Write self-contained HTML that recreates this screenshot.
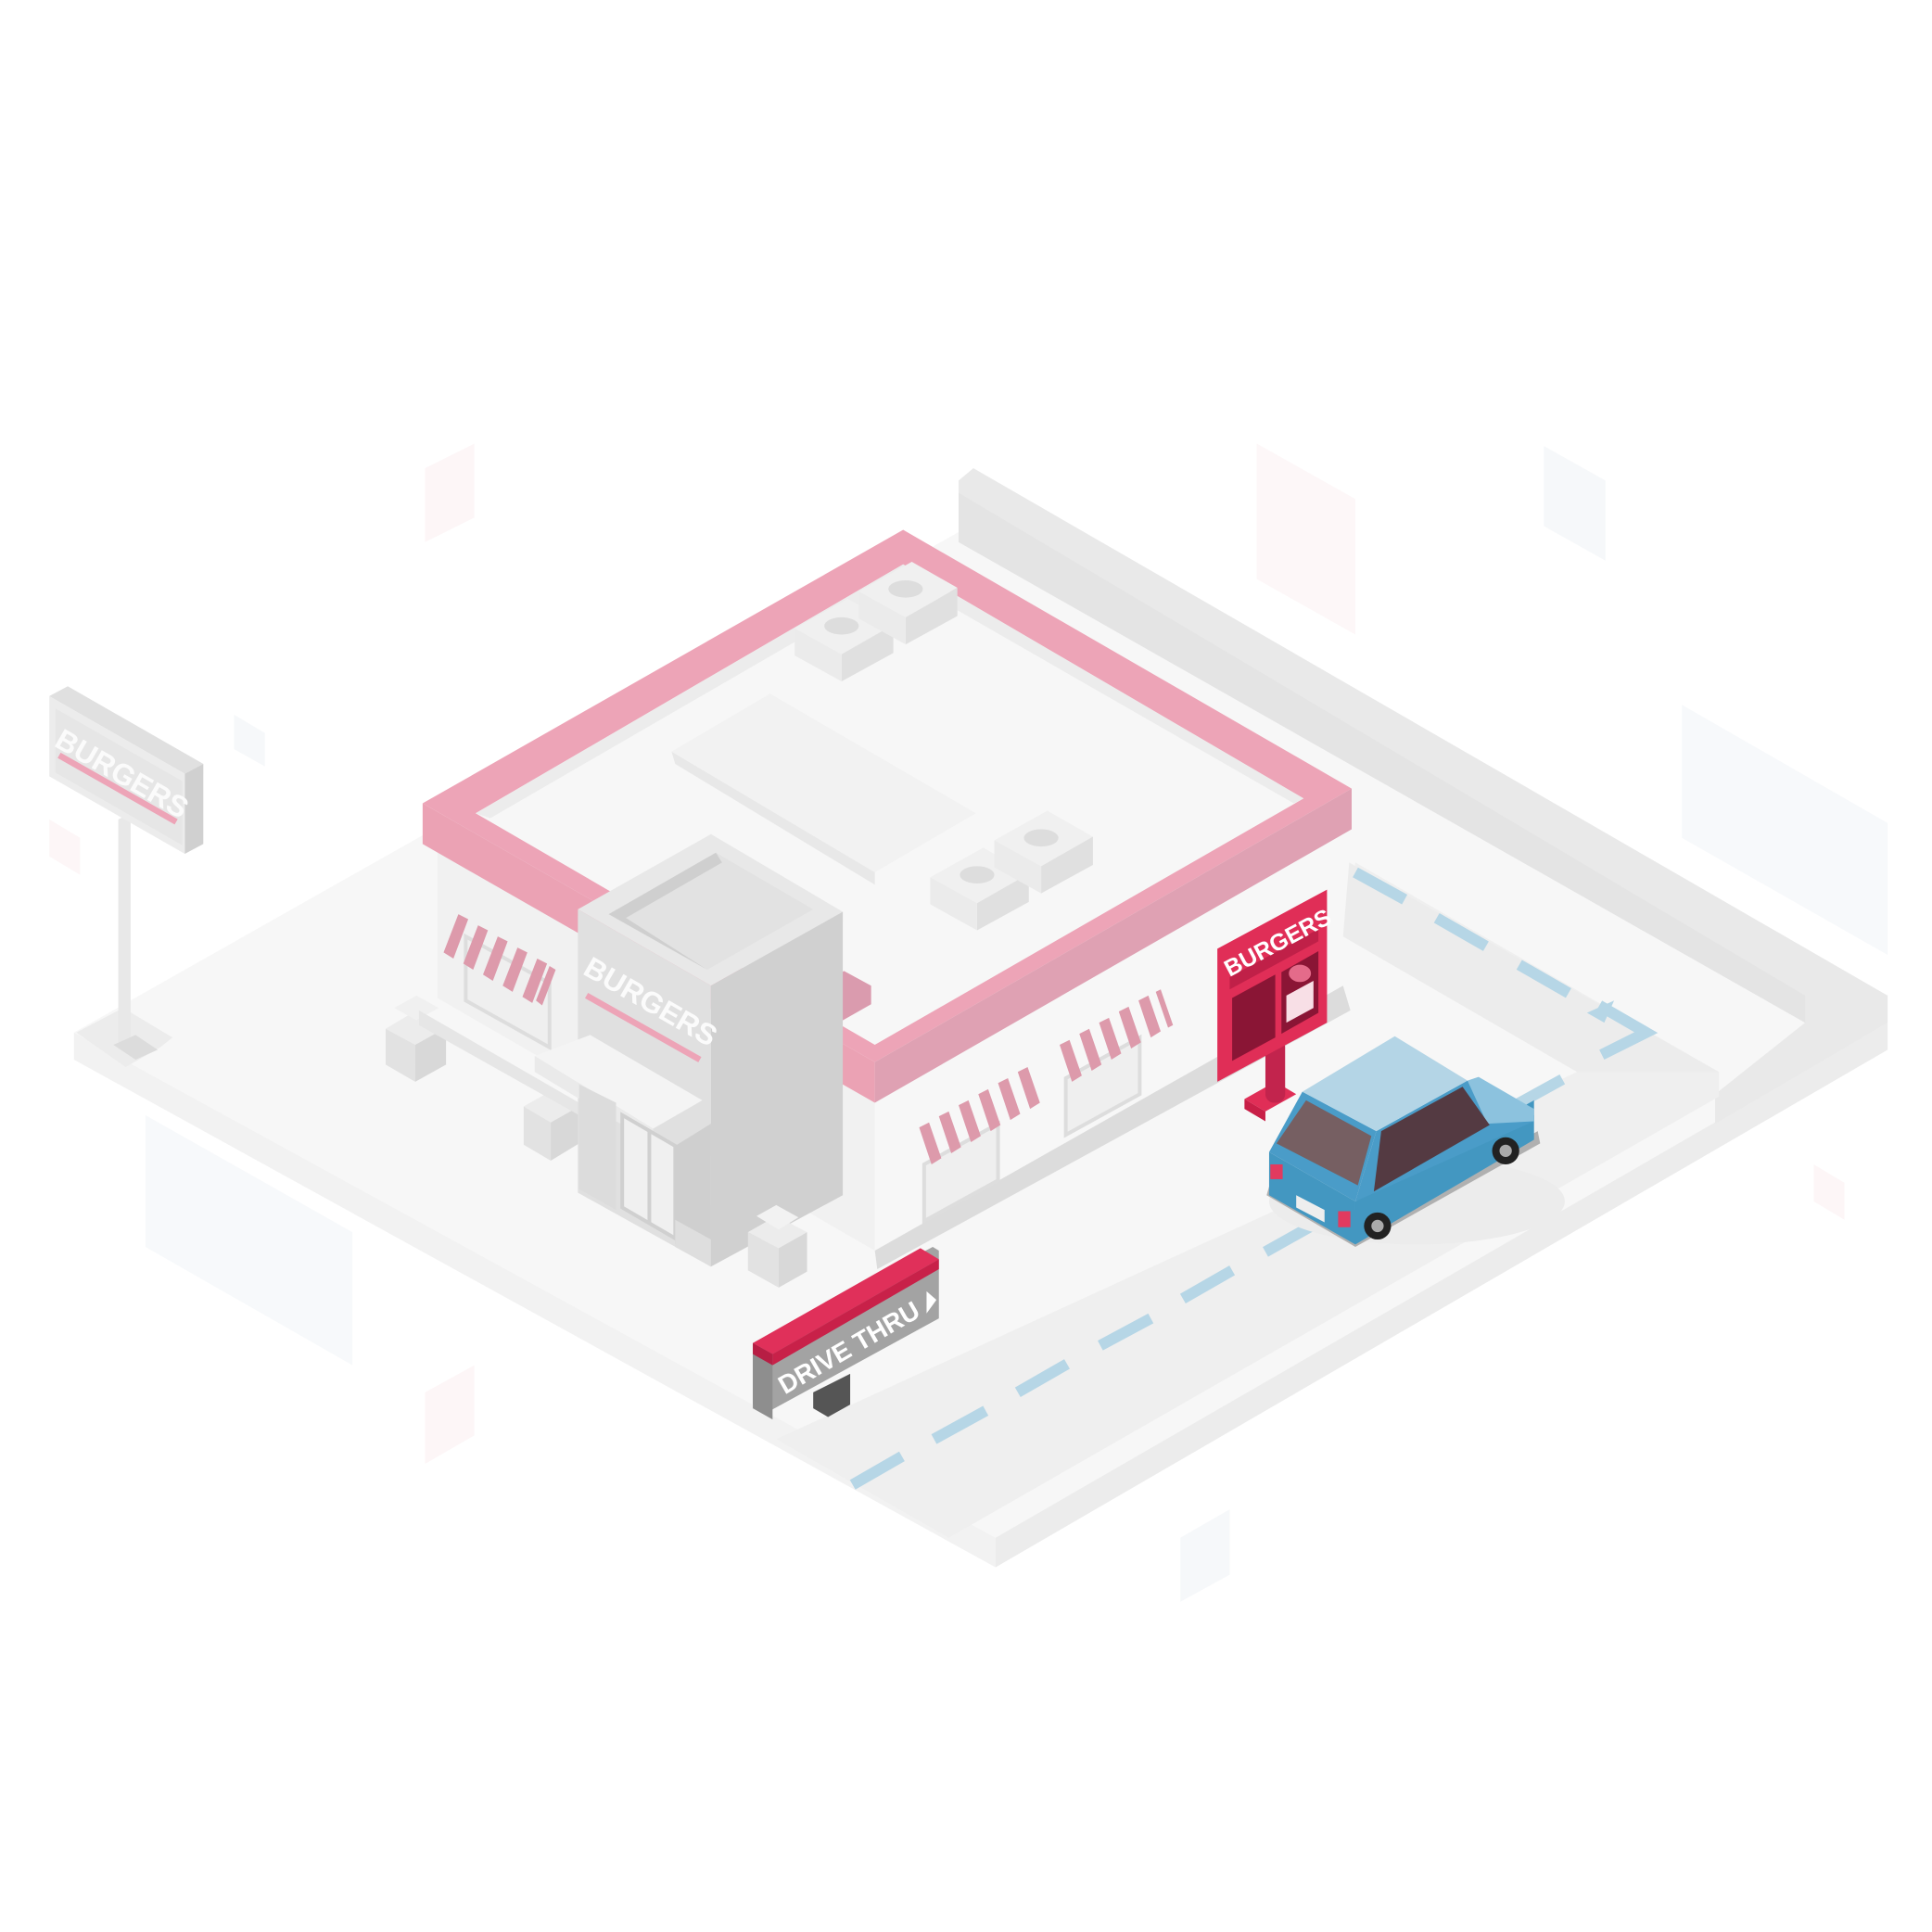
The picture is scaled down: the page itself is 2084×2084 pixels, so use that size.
<!DOCTYPE html>
<html><head><meta charset="utf-8"><style>html,body{margin:0;padding:0;background:#fff}svg{display:block}</style></head><body>
<svg width="2084" height="2084" viewBox="0 0 1568 1568" xmlns="http://www.w3.org/2000/svg" font-family="Liberation Sans, sans-serif" font-weight="bold">
<polygon points="345,380 385,360 385,420 345,440" fill="#fdf6f7"/>
<polygon points="1020,360 1100,405 1100,515 1020,470" fill="#fdf7f8"/>
<polygon points="1253,362 1303,390 1303,455 1253,427" fill="#f6f8fa"/>
<polygon points="1365,572 1532,668 1532,775 1365,680" fill="#f7f9fb"/>
<polygon points="118,905 286,1000 286,1108 118,1012" fill="#f7f9fb"/>
<polygon points="345,1130 385,1108 385,1165 345,1188" fill="#fdf6f7"/>
<polygon points="958,1248 998,1225 998,1278 958,1300" fill="#f6f8fa"/>
<polygon points="190,580 215,595 215,622 190,608" fill="#f6f8fa"/>
<polygon points="40,665 65,680 65,710 40,695" fill="#fdf6f7"/>
<polygon points="1472,945 1497,960 1497,990 1472,975" fill="#fdf6f7"/>
<!-- ground -->
<polygon points="60,838 790,425 1532,830 808,1248" fill="#f7f7f7"/>
<polygon points="60,838 808,1248 808,1272 60,860" fill="#f2f2f2"/>
<polygon points="808,1248 1532,830 1532,852 808,1272" fill="#ececec"/>
<polygon points="778,390 790,380 1532,808 1532,830 1392,912 1392,888 1465,830 778,440" fill="#e9e9e9"/>
<polygon points="778,400 1465,808 1465,830 778,440" fill="#e4e4e4"/>
<!-- road -->
<polygon points="630,1168 770,1248 1395,890 1395,870 1100,700 1090,760 1280,870" fill="#efefef"/>
<polygon points="1095,700 1395,870 1280,870 1090,760" fill="#ececec"/>
<g stroke="#b6d6e6" stroke-width="9">
<line x1="692" y1="1205" x2="732" y2="1182"/><line x1="758" y1="1168" x2="800" y2="1145"/><line x1="826" y1="1130" x2="866" y2="1107"/><line x1="893" y1="1092" x2="934" y2="1070"/><line x1="960" y1="1054" x2="1000" y2="1031"/><line x1="1027" y1="1016" x2="1068" y2="993"/><line x1="1228" y1="898" x2="1268" y2="876"/>
<line x1="1100" y1="708" x2="1140" y2="730"/><line x1="1166" y1="745" x2="1206" y2="768"/><line x1="1233" y1="783" x2="1273" y2="806"/>
<polyline points="1300,856 1336,838 1298,816" fill="none"/>
</g>
<polygon points="1288,822 1310,812 1302,830" fill="#b6d6e6"/>
<!-- building walls -->
<polygon points="355,690 710,895 710,1015 355,810" fill="#f1f1f1"/>
<polygon points="710,895 1090,680 1090,800 710,1015" fill="#f7f7f7"/>
<polygon points="710,1015 1090,800 1096,820 712,1030" fill="#dcdcdc"/>
<!-- roof -->
<polygon points="733,430 1097,640 710,862 343,652" fill="#eda4b7"/>
<polygon points="343,652 710,862 710,895 343,685" fill="#eba2b4"/>
<polygon points="710,862 1097,640 1097,673 710,895" fill="#dfa1b3"/>
<polygon points="733,458 1058,648 710,848 386,660" fill="#f7f7f7"/>
<polygon points="733,458 1058,648 1050,652 733,470 398,664 386,660" fill="#ececec"/>
<polygon points="545,610 625,563 792,660 710,708" fill="#f2f2f2"/>
<polygon points="545,610 710,708 710,718 548,620" fill="#e8e8e8"/>
<g>
<polygon points="645,510 688,486 725,507 683,531" fill="#f0f0f0"/><polygon points="683,531 725,507 725,530 683,553" fill="#e0e0e0"/><polygon points="645,510 683,531 683,553 645,532" fill="#ebebeb"/><ellipse cx="683" cy="508" rx="14" ry="7" fill="#ddd"/>
<polygon points="697,480 740,456 777,477 735,501" fill="#f0f0f0"/><polygon points="735,501 777,477 777,500 735,523" fill="#e0e0e0"/><polygon points="697,480 735,501 735,523 697,502" fill="#ebebeb"/><ellipse cx="735" cy="478" rx="14" ry="7" fill="#ddd"/>
<polygon points="755,712 798,688 835,709 793,733" fill="#f0f0f0"/><polygon points="793,733 835,709 835,732 793,755" fill="#e0e0e0"/><polygon points="755,712 793,733 793,755 755,734" fill="#ebebeb"/><ellipse cx="793" cy="710" rx="14" ry="7" fill="#ddd"/>
<polygon points="807,682 850,658 887,679 845,703" fill="#f0f0f0"/><polygon points="845,703 887,679 887,702 845,725" fill="#e0e0e0"/><polygon points="807,682 845,703 845,725 807,704" fill="#ebebeb"/><ellipse cx="845" cy="680" rx="14" ry="7" fill="#ddd"/>
</g>
<polygon points="628,820 685,788 707,800 707,815 628,860" fill="#da9bae"/>
<!-- windows -->
<polygon points="378,760 446,798 446,850 378,812" fill="#efefef" stroke="#ddd" stroke-width="3"/>
<polygon points="865,875 925,842 925,888 865,921" fill="#efefef" stroke="#ddd" stroke-width="3"/>
<polygon points="750,945 810,912 810,958 750,991" fill="#efefef" stroke="#ddd" stroke-width="3"/>
<!-- awnings: stripes -->
<g fill="#dd9aab">
<polygon points="372,742 380,746 368,778 360,773"/><polygon points="388,751 396,755 384,787 376,782"/><polygon points="404,760 412,764 400,796 392,791"/><polygon points="420,769 428,773 416,805 408,800"/><polygon points="436,778 444,782 432,814 424,809"/><polygon points="446,784 451,787 440,816 435,812"/>
<polygon points="746,915 754,911 764,940 756,945"/><polygon points="762,906 770,902 780,931 772,936"/><polygon points="778,897 786,893 796,922 788,927"/><polygon points="794,888 802,884 812,913 804,918"/><polygon points="810,879 818,875 828,904 820,909"/><polygon points="826,870 834,866 844,895 836,900"/>
<polygon points="860,848 868,844 878,873 870,878"/><polygon points="876,839 884,835 894,864 886,869"/><polygon points="892,830 900,826 910,855 902,860"/><polygon points="908,821 916,817 926,846 918,851"/><polygon points="924,812 932,808 942,837 934,842"/><polygon points="938,805 942,803 952,832 948,834"/>
</g>
<!-- side boxes -->
<polygon points="313,835 338,820 362,834 337,848" fill="#ececec"/><polygon points="313,835 337,848 337,878 313,864" fill="#e2e2e2"/><polygon points="337,848 362,834 362,864 337,878" fill="#d8d8d8"/>
<polygon points="320,818 338,808 356,818 338,828" fill="#f0f0f0"/>
<polygon points="425,898 448,885 470,898 447,911" fill="#ececec"/><polygon points="425,898 447,911 447,942 425,929" fill="#e2e2e2"/><polygon points="447,911 470,898 470,928 447,942" fill="#d8d8d8"/>
<polygon points="340,820 470,895 470,905 340,832" fill="#e6e6e6"/>
<!-- tower -->
<polygon points="577,677 684,740 577,800 469,738" fill="#e8e8e8"/>
<polygon points="494,742 581,692 660,738 574,787" fill="#e2e2e2"/>
<polygon points="494,742 581,692 586,700 508,745 574,787" fill="#cfcfcf"/>
<polygon points="469,738 577,800 577,1028 469,968" fill="#e0e0e0"/>
<polygon points="577,800 684,740 684,970 577,1028" fill="#d0d0d0"/>
<text x="0" y="0" font-size="24" fill="#fbfbfb" transform="translate(472,790) rotate(30)">BURGERS</text>
<line x1="476" y1="808" x2="568" y2="860" stroke="#eda4b7" stroke-width="5"/>
<polygon points="434,857 479,840 570,893 530,916" fill="#f4f4f4"/>
<polygon points="434,857 530,916 530,928 434,870" fill="#eaeaea"/>
<polygon points="470,880 500,895 500,982 470,965" fill="#dcdcdc"/>
<polygon points="505,905 548,930 548,1005 505,980" fill="#f0f0f0" stroke="#d0d0d0" stroke-width="3"/>
<line x1="527" y1="917" x2="527" y2="992" stroke="#d0d0d0" stroke-width="3"/>
<polygon points="548,930 577,912 577,1028 548,1010" fill="#cfcfcf"/>
<polygon points="548,990 577,1006 577,1028 548,1012" fill="#dedede"/>
<polygon points="607,1000 630,987 655,1000 632,1013" fill="#ececec"/><polygon points="607,1000 632,1013 632,1045 607,1031" fill="#e2e2e2"/><polygon points="632,1013 655,1000 655,1032 632,1045" fill="#d8d8d8"/>
<polygon points="614,987 630,978 648,988 632,998" fill="#f2f2f2"/>
<!-- menu board -->
<polygon points="1010,892 1035,878 1052,888 1027,902" fill="#e02e57"/>
<polygon points="1010,892 1027,902 1027,910 1010,900" fill="#c81f47"/>
<rect x="1027" y="843" width="16" height="52" rx="7" fill="#c2244d"/>
<polygon points="988,770 1077,722 1077,830 988,878" fill="#e02e57"/>
<polygon points="998,793 1070,754 1070,764 998,803" fill="#c02048"/>
<polygon points="1000,810 1035,791 1035,842 1000,861" fill="#8a1535"/>
<polygon points="1040,789 1070,772 1070,822 1040,839" fill="#8a1535"/>
<polygon points="1044,808 1066,796 1066,818 1044,830" fill="#f8dfe6"/>
<ellipse cx="1055" cy="790" rx="9" ry="7" fill="#e46b8a"/>
<text font-size="19" fill="#fff" transform="translate(998,793) rotate(-28)">BURGERS</text>
<!-- car -->
<ellipse cx="1150" cy="975" rx="120" ry="35" fill="#ececec"/>
<polygon points="1028,970 1100,1012 1250,928 1248,918 1100,1003 1030,963" fill="#b0b0b0"/>
<polygon points="1030,935 1100,975 1100,1010 1030,970" fill="#4397c1"/>
<polygon points="1100,975 1245,893 1245,925 1100,1010" fill="#4397c1"/>
<polygon points="1057,886 1117,918 1100,975 1030,935" fill="#4a9cc8"/>
<polygon points="1117,918 1191,877 1245,905 1245,910 1100,975" fill="#4a9cc8"/>
<polygon points="1191,877 1200,874 1245,900 1245,910 1207,912" fill="#8cc2de"/>
<polygon points="1057,886 1132,841 1191,877 1117,918" fill="#b4d5e6"/>
<polygon points="1060,893 1113,922 1102,962 1036,928" fill="#765f62"/>
<polygon points="1121,918 1187,882 1209,913 1115,967" fill="#543a42"/>
<rect x="1031" y="945" width="10" height="12" fill="#e23a5f"/><rect x="1086" y="983" width="10" height="13" fill="#e23a5f"/>
<polygon points="1052,970 1075,982 1075,992 1052,980" fill="#eee"/>
<circle cx="1118" cy="995" r="11" fill="#222"/><circle cx="1118" cy="995" r="5" fill="#aaa"/>
<circle cx="1222" cy="934" r="11" fill="#222"/><circle cx="1222" cy="934" r="5" fill="#aaa"/>
<!-- drive thru sign -->
<polygon points="660,1130 690,1115 690,1140 672,1150 660,1143" fill="#555"/>
<polygon points="611,1090 757,1012 762,1015 762,1070 625,1145 611,1140" fill="#a3a3a3"/>
<polygon points="611,1090 627,1099 627,1152 611,1143" fill="#8e8e8e"/>
<polygon points="611,1090 747,1013 762,1022 627,1099" fill="#e0305a"/>
<polygon points="611,1090 627,1099 627,1108 611,1099" fill="#b71e44"/>
<polygon points="627,1099 762,1022 762,1030 627,1108" fill="#c82149"/>
<text font-size="21" fill="#fff" transform="translate(637,1132) rotate(-30)">DRIVE THRU</text>
<polygon points="752,1048 760,1055 752,1066" fill="#fff"/>
<!-- pole sign -->
<polygon points="62,838 100,818 140,842 130,850 102,866" fill="#ececec"/>
<polygon points="96,665 106,660 106,855 96,850" fill="#e8e8e8"/>
<polygon points="92,848 110,840 128,852 110,860" fill="#dcdcdc"/>
<polygon points="40,565 55,557 165,620 150,628" fill="#e0e0e0"/>
<polygon points="40,565 150,628 150,693 40,630" fill="#ececec"/>
<polygon points="150,628 165,620 165,685 150,693" fill="#d0d0d0"/>
<polygon points="45,575 148,634 148,686 45,627" fill="#e6e6e6"/>
<text font-size="24" fill="#fbfbfb" transform="translate(43,605) rotate(30)">BURGERS</text>
<line x1="48" y1="613" x2="143" y2="667" stroke="#eda4b7" stroke-width="5"/>
</svg>
</body></html>
